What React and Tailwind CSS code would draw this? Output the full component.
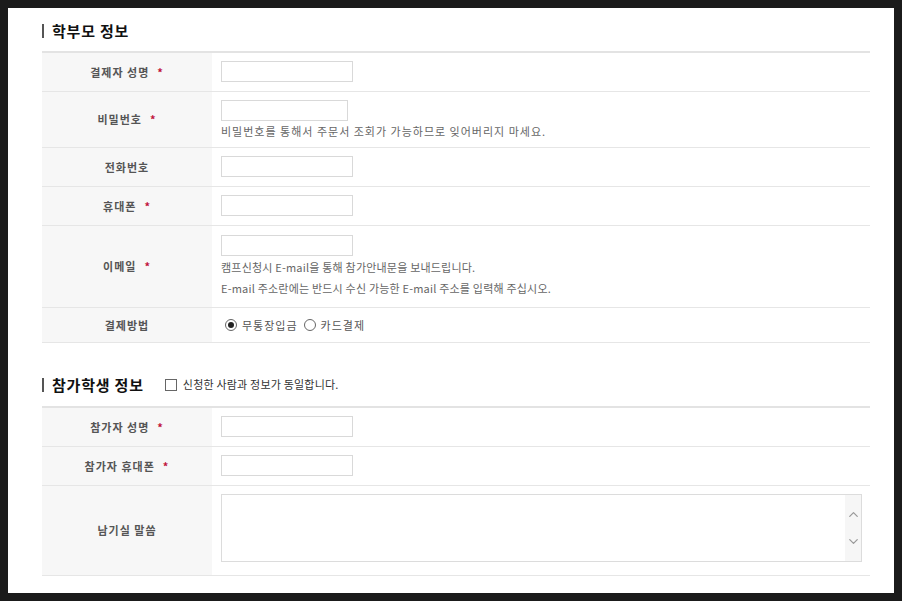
import { ChevronUp, ChevronDown } from "lucide-react";

const font = { fontFamily: '"Noto Sans CJK KR", "Noto Sans", sans-serif' };

function SectionTitle({ children, extra }) {
  return (
    <div className="flex items-center h-[17px]">
      <span className="w-[2px] h-[14px] bg-[#555]" />
      <h2 className="ml-2 text-[15px] font-bold text-[#111] leading-none tracking-[0.8px]">{children}</h2>
      {extra}
    </div>
  );
}

function Label({ children, required }) {
  return (
    <div className="w-[170px] shrink-0 bg-[#f7f7f7] flex items-center justify-center text-[11px] font-bold text-[#555] tracking-[1px]">
      <span>{children}</span>
      {required && <span className="ml-[8px] text-[#c0143c] text-[11px]">*</span>}
    </div>
  );
}

function Row({ label, required, children, cls = "py-2 pb-[9px]" }) {
  return (
    <div className="flex border-b border-[#e6e6e6]">
      <Label required={required}>{label}</Label>
      <div className={`flex-1 pl-[9px] ${cls}`}>{children}</div>
    </div>
  );
}

function Input({ w = "w-[132px]" }) {
  return <input className={`${w} h-[21px] border border-[#d9d9d9] bg-white block outline-none`} />;
}

function Radio({ checked, label }) {
  return (
    <label className="flex items-center gap-[5px] mr-[6px]">
      <span className="w-[12px] h-[12px] rounded-full border border-[#666] flex items-center justify-center">
        {checked && <span className="w-[6px] h-[6px] rounded-full bg-[#222]" />}
      </span>
      <span className="text-[11px] text-[#555] tracking-[1px]">{label}</span>
    </label>
  );
}

export default function App() {
  return (
    <div className="bg-[#1b1b1b] p-2 h-[601px]" style={font}>
      <div className="bg-white h-full pl-[34px] pr-[24px] pt-[14px]">
        <SectionTitle>학부모 정보</SectionTitle>

        <div className="mt-[12px] border-t-2 border-[#e3e3e3]">
          <Row label="결제자 성명" required>
            <Input />
          </Row>
          <Row label="비밀번호" required cls="pt-[8px] pb-[7px]">
            <Input w="w-[127px]" />
            <p className="text-[11px] text-[#666] leading-[18px] mt-[1px] tracking-[1px]">
              비밀번호를 통해서 주문서 조회가 가능하므로 잊어버리지 마세요.
            </p>
          </Row>
          <Row label="전화번호">
            <Input />
          </Row>
          <Row label="휴대폰" required>
            <Input />
          </Row>
          <Row label="이메일" required cls="pt-[9px] pb-[8px]">
            <Input />
            <p className="text-[11px] text-[#666] leading-[21px] mt-[1px] tracking-[0.2px]">
              캠프신청시 E-mail을 통해 참가안내문을 보내드립니다.
            </p>
            <p className="text-[11px] text-[#666] leading-[21px] tracking-[0.2px]">
              E-mail 주소란에는 반드시 수신 가능한 E-mail 주소를 입력해 주십시오.
            </p>
          </Row>
          <Row label="결제방법" cls="h-[34px] flex items-center pl-[13px]">
            <Radio checked label="무통장입금" />
            <Radio label="카드결제" />
          </Row>
        </div>

        <div className="mt-[33px]">
          <SectionTitle
            extra={
              <label className="ml-[21px] flex items-center">
                <span className="w-[12px] h-[12px] border border-[#666] bg-white" />
                <span className="ml-[6px] text-[11px] text-[#333] tracking-[0.2px]">
                  신청한 사람과 정보가 동일합니다.
                </span>
              </label>
            }
          >
            참가학생 정보
          </SectionTitle>
        </div>

        <div className="mt-[13px] border-t-2 border-[#e3e3e3]">
          <Row label="참가자 성명" required>
            <Input />
          </Row>
          <Row label="참가자 휴대폰" required>
            <Input />
          </Row>
          <Row label="남기실 말씀" cls="pt-2 pb-[13px] pr-[8px]">
            <div className="h-[68px] border border-[#dcdcdc] flex">
              <textarea className="flex-1 resize-none outline-none" />
              <div className="w-[16px] bg-[#f6f6f6] flex flex-col justify-between items-center py-[12px] text-[#999]">
                <ChevronUp size={15} strokeWidth={2} />
                <ChevronDown size={15} strokeWidth={2} />
              </div>
            </div>
          </Row>
        </div>
      </div>
    </div>
  );
}
